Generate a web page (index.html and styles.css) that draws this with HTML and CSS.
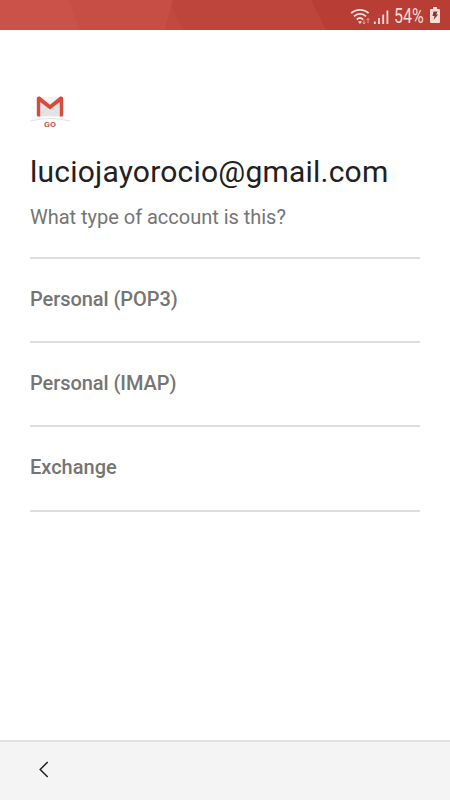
FILE: index.html
```html
<!DOCTYPE html>
<html lang="en">
<head>
<meta charset="utf-8">
<title>Account type</title>
<link rel="stylesheet" href="styles.css">
</head>
<body>
<header class="status">
  <svg class="status-bg" width="450" height="30" viewBox="0 0 450 30">
    <path fill="#cb5248" d="M0 0h450v30H0z"/>
    <path fill="#c74e44" d="M69 0h381v30H79z"/>
    <path fill="#bd453b" d="M173 0h277v30H183L171 7z"/>
    <path fill="#c2493f" d="M171 7L183 30H165z"/>
    <path fill="#b83e35" d="M311 0h139v30H326z"/>
  </svg>
  <svg class="signals" width="42" height="20" viewBox="0 0 42 20" fill="none" stroke="#f6dedb">
    <path stroke-width="1.8" d="M1.200 6.200c4.800-4.500 12.600-4.500 17.400 0M4 9.300c3.300-3.200 8.700-3.200 12 0M6.800 12.500c1.800-1.700 4.400-1.700 6.200 0"/>
    <path fill="#f6dedb" stroke="none" d="M8 14.600q2-1.400 4 0L10 17z"/>
    <path stroke="#df9d97" stroke-width="1" d="M14 12.500v4.500m-1.500-1.500L14 17l1.500-1.500M18 16v-4.500m-1.500 1.500L18 11.500l1.500 1.500"/>
    <path stroke-width="1.800" d="M24.800 14.500V17M29 11v6M33.200 7.500V17M37.400 3.500V17"/>
  </svg>
  <span class="percent">54%</span>
  <svg class="battery" width="10" height="16" viewBox="0 0 10 16">
    <path fill="#f6dedb" d="M3 0h4v2h2q1 0 1 1v12q0 1-1 1H1q-1 0-1-1V3q0-1 1-1h2z"/>
    <path fill="#8e332d" d="M3.500 4.500h4L6.200 7.500h2L3.500 13l1-4H2.500z"/>
  </svg>
</header>
<main class="content">
  <svg class="logo" width="40" height="40" viewBox="0 0 40 40">
    <path fill="#e4e4e4" d="M8 7h24v19.500H8z"/>
    <path fill="#f3f3f3" d="M9 7h22L20 16z"/>
    <path fill="none" stroke="#d2d2d2" stroke-width=".6" d="M10 26l8-9M30 26l-8-9"/>
    <path fill="#d54b3d" d="M6.800 8.500q0-2 2-2h1l10.200 8.200 10.200-8.200h1q2 0 2 2v16.500q0 1.500-1.500 1.500H29.800V12L20 19.500 10.200 12V26.500H8.300Q6.800 26.500 6.800 25z"/>
    <path fill="#fff" d="M0 30.500q20-5 40 0v9H0z"/>
    <path fill="none" stroke="#e2e2e2" stroke-width="1" d="M0 31q20-5 40 0"/>
    <text class="logo-text" x="20" y="37.400" text-anchor="middle" textLength="12" lengthAdjust="spacingAndGlyphs">GO</text>
  </svg>
  <h1 class="email"><span>luciojayorocio@gmail.com</span></h1>
  <p class="question">What type of account is this?</p>
  <ul class="types">
    <li>Personal (POP3)</li>
    <li>Personal (IMAP)</li>
    <li>Exchange</li>
  </ul>
</main>
<footer class="bar">
  <svg width="10" height="17" viewBox="0 0 10 17" fill="none" stroke="#202020" stroke-width="1.500"><path d="M8.700 1L1.200 8.500 8.700 16"/></svg>
</footer>
</body>
</html>
```
FILE: styles.css
```css
* { box-sizing: border-box; margin: 0; padding: 0; }
body {
  display: flex;
  flex-direction: column;
  height: 800px;
  background: #fff;
  font-family: Roboto, sans-serif;
}
svg { display: block; flex: none; }
.status {
  position: relative;
  display: flex;
  align-items: center;
  height: 30px;
  padding-left: 350px;
}
.status-bg { position: absolute; inset: 0; }
.signals { position: relative; margin-top: 4px; }
.percent {
  position: relative;
  width: 33px;
  margin: 2px 0 0 2px;
  color: #f6dedb;
  font-size: 20px;
  line-height: 24px;
  white-space: nowrap;
  transform: scaleX(.8);
  transform-origin: left;
}
.battery { position: relative; margin: -1px 0 0 3px; }
.content { flex: 1; padding: 60px 30px 0; }
.logo-text { font: 600 8px Roboto, sans-serif; fill: #c94b42; }
.email {
  margin-top: 22px;
  color: #212121;
  font-size: 30px;
  font-weight: 400;
  line-height: 40px;
  letter-spacing: .21px;
  white-space: nowrap;
}
.question {
  margin-top: 13px;
  color: #757575;
  font-size: 20px;
  line-height: 24px;
  letter-spacing: -.02px;
}
.types {
  margin-top: 28px;
  border-top: 2px solid #dedede;
  list-style: none;
}
.types li {
  height: 84.2px;
  padding-top: 28px;
  border-bottom: 2px solid #dedede;
  color: #757575;
  font-size: 20px;
  font-weight: 500;
  line-height: 24px;
  letter-spacing: -.06px;
}
.types li:last-child { letter-spacing: 0; }
.bar {
  display: flex;
  align-items: center;
  height: 60px;
  padding: 0 0 4px 39px;
  border-top: 2px solid #e2e2e2;
  background: #f4f4f4;
}
```
